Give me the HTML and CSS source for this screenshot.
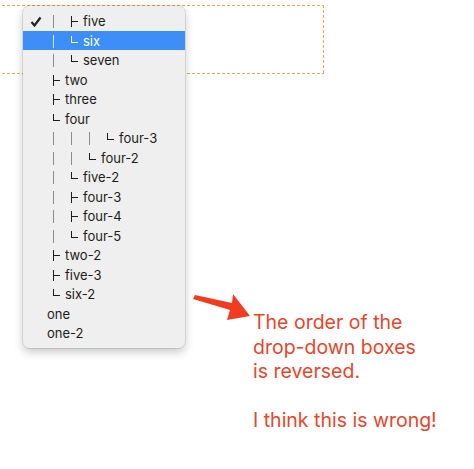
FILE: index.html
```html
<!DOCTYPE html>
<html>
<head>
<meta charset="utf-8">
<link rel="stylesheet" href="styles.css">
</head>
<body>
<div class="page">
  <div class="field"></div>
  <div class="note">
    <p>The order of the<br>drop-down boxes<br>is reversed.</p>
    <p>I think this is wrong!</p>
  </div>
  <svg class="arrow" width="70" height="40" viewBox="0 0 70 40">
    <path d="M1 10 L3 6 L40 14 L41 5 L58 27 L35 31 L38 21 Z" fill="#f23c22"/>
  </svg>
  <div class="menu">
    <div class="row"><svg class="check" width="12" height="11" viewBox="0 0 12 11"><path d="M1.5 6 L4.5 9.5 L10.5 1.5" fill="none" stroke="#222" stroke-width="2.2"/></svg><span class="c pipe"></span><span class="c tee"></span>five</div>
    <div class="row sel"><span class="c pipe"></span><span class="c elbow"></span>six</div>
    <div class="row"><span class="c pipe"></span><span class="c elbow"></span>seven</div>
    <div class="row"><span class="c tee"></span>two</div>
    <div class="row"><span class="c tee"></span>three</div>
    <div class="row"><span class="c elbow"></span>four</div>
    <div class="row"><span class="c pipe"></span><span class="c pipe"></span><span class="c pipe"></span><span class="c elbow"></span>four-3</div>
    <div class="row"><span class="c pipe"></span><span class="c pipe"></span><span class="c elbow"></span>four-2</div>
    <div class="row"><span class="c pipe"></span><span class="c elbow"></span>five-2</div>
    <div class="row"><span class="c pipe"></span><span class="c tee"></span>four-3</div>
    <div class="row"><span class="c pipe"></span><span class="c tee"></span>four-4</div>
    <div class="row"><span class="c pipe"></span><span class="c elbow"></span>four-5</div>
    <div class="row"><span class="c tee"></span>two-2</div>
    <div class="row"><span class="c tee"></span>five-3</div>
    <div class="row"><span class="c elbow"></span>six-2</div>
    <div class="row">one</div>
    <div class="row">one-2</div>
  </div>
</div>
</body>
</html>
```

FILE: styles.css
```css
html, body {
  margin: 0;
  padding: 0;
  background: #ffffff;
}
.page {
  position: relative;
  width: 474px;
  height: 469px;
  overflow: hidden;
  font-family: Inter, "Noto Sans", sans-serif;
}
.field {
  margin: 5px 0 0 -3px;
  width: 327px;
  height: 69px;
  background:
    repeating-linear-gradient(90deg, #eaa94e 0 3px, transparent 3px 5px) top left / 100% 1px no-repeat,
    repeating-linear-gradient(90deg, #eaa94e 0 3px, transparent 3px 5px) bottom left / 100% 1px no-repeat,
    repeating-linear-gradient(180deg, #eaa94e 0 3px, transparent 3px 5px) top right / 1px 100% no-repeat;
}
.note {
  margin: 236px 0 0 253px;
  color: #e4472d;
  font-size: 19.5px;
  line-height: 24.5px;
}
.note p {
  margin: 0 0 24.5px 0;
}
.arrow {
  position: absolute;
  left: 192px;
  top: 289px;
}
.menu {
  position: absolute;
  left: 23px;
  top: 6px;
  width: 162px;
  padding: 5px 0;
  background: #efefef;
  border-radius: 6px;
  box-shadow: 0 0 0 0.5px rgba(0,0,0,0.18), 0 4px 10px rgba(0,0,0,0.22);
  font-size: 13px;
  color: #1c1c1c;
}
.row {
  position: relative;
  height: 19.5px;
  line-height: 20px;
  padding-left: 24px;
  display: flex;
  align-items: flex-start;
  white-space: nowrap;
}
.row.sel {
  background: #3d8ef6;
  color: #ffffff;
}
.check {
  position: absolute;
  left: 7px;
  top: 5px;
}
.c {
  position: relative;
  flex: none;
  width: 18px;
  height: 19.5px;
}
.c::before, .c::after {
  content: "";
  position: absolute;
  background: currentColor;
}
.pipe::before {
  left: 6px;
  top: 4px;
  width: 1px;
  height: 13px;
  background: #8c8c8c;
}
.sel .pipe::before {
  background: #cfe2fc;
}
.tee::before {
  left: 6px;
  top: 5px;
  width: 1px;
  height: 11px;
}
.tee::after {
  left: 6px;
  top: 10px;
  width: 7px;
  height: 1px;
}
.elbow::before {
  left: 6px;
  top: 5px;
  width: 1px;
  height: 7px;
}
.elbow::after {
  left: 6px;
  top: 11px;
  width: 7px;
  height: 1px;
}
```
